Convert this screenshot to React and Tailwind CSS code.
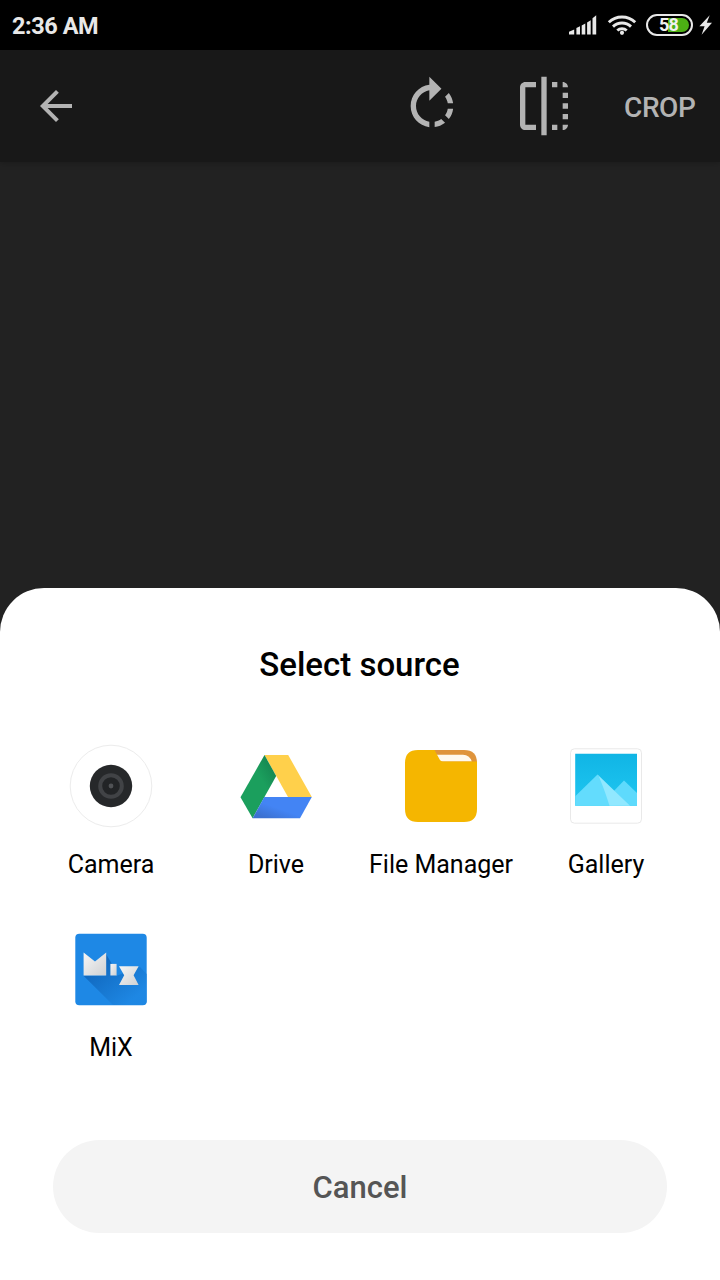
const BackIcon = () => (
  <svg viewBox="0 0 24 24" className="size-12" fill="currentColor">
    <path d="M20 11H7.83l5.59-5.59L12 4l-8 8 8 8 1.41-1.41L7.83 13H20v-2z" />
  </svg>
);

const RotateIcon = () => (
  <svg viewBox="0 0 24 24" className="size-16" fill="currentColor">
    <path d="M15.55 5.55L11 1v3.07C7.06 4.56 4 7.92 4 12s3.05 7.44 7 7.93v-2.02c-2.84-.48-5-2.94-5-5.91s2.16-5.43 5-5.91V10l4.55-4.45zM19.93 11c-.17-1.39-.72-2.73-1.62-3.89l-1.42 1.42c.54.75.88 1.6 1.02 2.47h2.02zM13 17.9v2.02c1.39-.17 2.74-.71 3.9-1.61l-1.44-1.44c-.75.54-1.59.89-2.46 1.03zm3.89-2.42l1.42 1.41c.9-1.16 1.45-2.5 1.62-3.89h-2.02c-.14.87-.48 1.72-1.02 2.48z" />
  </svg>
);

const FlipIcon = () => (
  <svg viewBox="0 0 24 24" className="size-16" fill="currentColor">
    <path d="M15 21h2v-2h-2v2zm4-12h2V7h-2v2zM3 5v14c0 1.1.9 2 2 2h4v-2H5V5h4V3H5c-1.1 0-2 .9-2 2zm16-2v2h2c0-1.1-.9-2-2-2zm-8 20h2V1h-2v22zm8-6h2v-2h-2v2zM15 5h2V3h-2v2zm4 8h2v-2h-2v2zm0 8c1.1 0 2-.9 2-2h-2v2z" />
  </svg>
);

const SignalIcon = () => (
  <svg viewBox="0 0 28 20" className="h-5 w-7" fill="#e8e8e8">
    <path d="M0 19.6v-2.8l5.2-2.4v5.2zM7.4 19.6v-6.6l3.6-1.8v8.4zM12.7 19.6v-9.2l3.6-2v11.2zM18.1 19.6V7.4l3.6-2.2v14.4zM23.5 19.6V3.2L27.2.2v19.4z" />
  </svg>
);

const WifiIcon = () => (
  <svg viewBox="0 0 30 22" className="h-[22px] w-[30px]" fill="none" stroke="#e8e8e8" strokeWidth="2.9">
    <path d="M1.8 8.3a19 19 0 0 1 26.4 0M6 12.6a13 13 0 0 1 18 0M10.3 16.5a7 7 0 0 1 9.4 0" />
    <circle cx="15" cy="18.8" r="2.1" fill="#e8e8e8" stroke="none" />
  </svg>
);

const BoltIcon = () => (
  <svg viewBox="0 0 14 20" className="h-5 w-3.5" fill="#e8e8e8">
    <path d="M10.7.2.4 11.2h5.2L2.6 19.8 13 7.7H7.8z" />
  </svg>
);

const CameraIcon = () => (
  <svg viewBox="0 0 84 84" className="size-[84px]">
    <circle cx="42" cy="42" r="40.8" fill="#fff" stroke="#ececec" strokeWidth="1" />
    <circle cx="42" cy="42" r="21.2" fill="#26282a" />
    <circle cx="42" cy="42" r="10.8" fill="#222426" stroke="#414346" strokeWidth="4" />
    <circle cx="42" cy="42" r="2.4" fill="#505255" />
  </svg>
);

const DriveIcon = () => (
  <svg viewBox="0 0 84 84" className="size-[84px]">
    <defs>
      <linearGradient id="dg" x1="0" y1="1" x2="1" y2="0">
        <stop offset=".6" stopColor="#1b9f5d" />
        <stop offset=".9" stopColor="#158450" />
      </linearGradient>
      <linearGradient id="db" x1="0" y1="1" x2="1" y2="0">
        <stop offset=".12" stopColor="#3c71d1" />
        <stop offset=".45" stopColor="#4384f4" />
      </linearGradient>
    </defs>
    <path d="M30.5 11h23.7L77.8 53H54z" fill="#ffd04b" />
    <path d="M30.5 11 42.2 32 18.6 74.2 6.5 53.3z" fill="url(#dg)" />
    <path d="M30.3 53h47.5L66 74.2H18.6z" fill="url(#db)" />
  </svg>
);

const FolderIcon = () => (
  <svg viewBox="0 0 84 84" className="size-[84px]">
    <path d="M20 6h45q13 0 13 13v5H20z" fill="#df943c" />
    <path d="M37 10.8h27q6.5 0 8.8 6.8H41z" fill="#fff9ee" />
    <path d="M19 6h16.5l5.3 9.7q.9 1.8 3 1.8H78V65q0 13-13 13H19Q6 78 6 65V19Q6 6 19 6z" fill="#f5b600" />
  </svg>
);

const GalleryIcon = () => (
  <svg viewBox="0 0 84 84" className="size-[84px]">
    <defs>
      <linearGradient id="sky" x2="0" y2="1">
        <stop stopColor="#10b5e5" />
        <stop offset="1" stopColor="#20c7f1" />
      </linearGradient>
    </defs>
    <rect x="6.5" y="4.8" width="71" height="74.4" rx="4" fill="#fff" stroke="#e9e9e9" />
    <path d="M11.2 9.8H73v52H11.2z" fill="url(#sky)" />
    <path d="M45 52 60 36.5 73 49v12.8H45z" fill="#5edafc" />
    <path d="M11.2 52.2 33.5 30.5 52 61.8H11.2z" fill="#63dcfd" />
    <path d="M33.5 30.5 66 61.8H45.5Q38 38 33.5 30.5z" fill="#91e8ff" />
  </svg>
);

const MixIcon = () => (
  <svg viewBox="0 -1 84 84" className="size-[84px]">
    <defs>
      <linearGradient id="mixShade" gradientUnits="userSpaceOnUse" x1="28" y1="40" x2="58" y2="76">
        <stop stopColor="#0e63b8" />
        <stop offset="1" stopColor="#1e87e3" />
      </linearGradient>
      <linearGradient id="mixMetal" x1="0" y1="0" x2="1" y2="1">
        <stop stopColor="#f6f6f6" />
        <stop offset="1" stopColor="#cfd1d3" />
      </linearGradient>
    </defs>
    <rect x="6.3" y="5.8" width="71.4" height="71.4" rx="4" fill="#1e88e5" />
    <path d="M14.5 47.7 36.5 47.7 37 26l6 10 4 12 24-9 6.7 7V73q0 4-4 4H44z" fill="url(#mixShade)" opacity=".8" />
    <path d="M14.6 24.4 26 33.4 37.2 24.4v23.2H14.6z" fill="url(#mixMetal)" />
    <path d="M41.4 35.9h6.2v11.6h-6.2z" fill="url(#mixMetal)" />
    <path d="M50 38.2h19.6l-5 9 5 9.8H50l5.2-9.8z" fill="url(#mixMetal)" />
  </svg>
);

const sources = [
  { name: "Camera", Icon: CameraIcon },
  { name: "Drive", Icon: DriveIcon },
  { name: "File Manager", Icon: FolderIcon },
  { name: "Gallery", Icon: GalleryIcon },
  { name: "MiX", Icon: MixIcon },
];

export default function App() {
  return (
    <div className="flex h-[1280px] w-[720px] flex-col overflow-hidden bg-[#222222] font-['Roboto',sans-serif]">
      <div className="flex h-[50px] shrink-0 items-center bg-black pr-[7px] pl-3">
        <span className="flex-1 pt-0.5 text-[23.5px] leading-7 font-bold tracking-[-0.45px] text-[#e8e8e8]">2:36 AM</span>
        <SignalIcon />
        <div className="ml-[10px] flex"><WifiIcon /></div>
        <div className="ml-[9px] flex h-[22px] w-[47px] rounded-full border-2 border-[#e8e8e8] p-[2px]">
          <div className="flex flex-1 items-center justify-center rounded-full bg-linear-to-r from-black from-45% to-[#4caf14] to-45% pr-0.5 text-[18px] leading-none font-bold tracking-[-0.8px] text-[#f0f0f0]">
            58
          </div>
        </div>
        <div className="ml-[6px] flex"><BoltIcon /></div>
      </div>

      <header className="flex h-28 shrink-0 items-center bg-[#181818] pr-6 pl-8 text-[#b3b3b3] shadow-[0_2px_6px_rgba(0,0,0,0.2)]">
        <button className="mr-auto"><BackIcon /></button>
        <button className="mr-12"><RotateIcon /></button>
        <button className="mr-12"><FlipIcon /></button>
        <button className="w-[72px] pt-1 text-left text-[28px] leading-8 font-medium tracking-[-0.4px] whitespace-nowrap">CROP</button>
      </header>

      <main className="flex-1" />

      <section className="flex h-[692px] shrink-0 flex-col rounded-t-[44px] bg-white px-[28px] pt-[57px] text-black">
        <h1 className="pr-px text-center text-[33px] leading-10 font-medium">Select source</h1>
        <div className="mt-[59px] grid grid-cols-[repeat(4,165px)] gap-y-[45px]">
          {sources.map(({ name, Icon }) => (
            <button key={name} className="flex h-[138px] flex-col items-center">
              <Icon />
              <span className="mt-[21px] pl-px text-[25px] leading-8 whitespace-nowrap">{name}</span>
            </button>
          ))}
        </div>
        <button className="mx-[25px] mt-[75px] h-[93px] rounded-full bg-[#f4f4f4] pt-1 text-[31px] font-medium text-[#555555]">
          Cancel
        </button>
      </section>
    </div>
  );
}
